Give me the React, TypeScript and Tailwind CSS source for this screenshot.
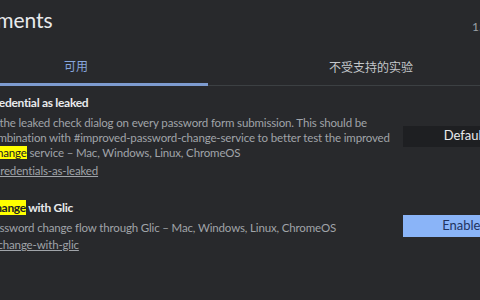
import React from "react";

const font = "font-['Lato','Noto_Sans_CJK_SC',sans-serif]";

function Mark({ children }: { children: React.ReactNode }) {
  return <span className="bg-[#ffff00] text-[#202124]">{children}</span>;
}

export default function App() {
  return (
    <div className={`w-[480px] h-[300px] overflow-hidden bg-[#28292c] ${font}`}>
      <div className="-ml-[62px] w-[700px] whitespace-nowrap">
        {/* header */}
        <div className="flex items-center h-[38px] pt-[1px]">
          <h1 className="w-[534px] shrink-0 text-[21px] leading-none text-[#e8eaed]">Experiments</h1>
          <span className="shrink-0 text-[12px] text-[#9aa0a6] pt-[14px]">150.0.7000.0</span>
        </div>

        {/* tabs */}
        <div className="flex h-[48px] ml-[6px]">
          <div className="w-[264px] flex items-center justify-center border-b-[3px] border-[#7d9bd0] pt-[11px]">
            <span className="text-[12px] text-[#87a6de] font-['Noto_Sans_CJK_SC',sans-serif]">可用</span>
          </div>
          <div className="w-[326px] flex items-center justify-center border-b border-[#3c4043] pt-[11px]">
            <span className="text-[12px] text-[#c4c7cb] font-['Noto_Sans_CJK_SC',sans-serif]">不受支持的实验</span>
          </div>
        </div>

        {/* entry 1 */}
        <div className="flex items-center w-[589px] pt-[8px]">
          <div className="w-[465px] shrink-0 overflow-hidden text-[11.5px] tracking-[-0.15px]">
            <div className="pl-[8px] font-bold text-[12px] tracking-[-0.3px] text-[#e8eaed] leading-[17px]">
              Mark all credential as leaked
            </div>
            <div className="mt-[4px] text-[#a0a4a9] leading-[15px]">
              <div className="pl-[18px]">Displays the leaked check dialog on every password form submission. This should be</div>
              <div className="pl-[10px]">used in combination with #improved-password-change-service to better test the improved</div>
              <div className="pl-[4px]">
                password c<Mark>hange</Mark> service – Mac, Windows, Linux, ChromeOS
              </div>
            </div>
            <div className="pl-[7px] mt-[3px] leading-[15px] text-[#a0a4a9] underline">#mark-all-credentials-as-leaked</div>
          </div>
          <div className="w-[124px] h-[21px] shrink-0 bg-[#1e1f22] flex items-center justify-center text-[13px] text-[#e8eaed]">
            Default
          </div>
        </div>

        {/* entry 2 */}
        <div className="flex items-center w-[589px] pt-[21px]">
          <div className="w-[465px] shrink-0 overflow-hidden text-[11.5px] tracking-[-0.15px]">
            <div className="font-bold text-[12px] tracking-[-0.3px] text-[#e8eaed] leading-[17px]">
              Password c<Mark>hange</Mark> with Glic
            </div>
            <div className="pl-[9px] mt-[4px] text-[#a0a4a9] leading-[15px]">
              Enables password change flow through Glic – Mac, Windows, Linux, ChromeOS
            </div>
            <div className="pl-[2px] mt-[2px] leading-[15px] text-[#a0a4a9] underline">#password-change-with-glic</div>
          </div>
          <div className="w-[124px] h-[22px] shrink-0 bg-[#8ab4f8] flex items-center justify-center text-[13px] text-[#1f3360]">
            Enabled
          </div>
        </div>
      </div>
    </div>
  );
}
